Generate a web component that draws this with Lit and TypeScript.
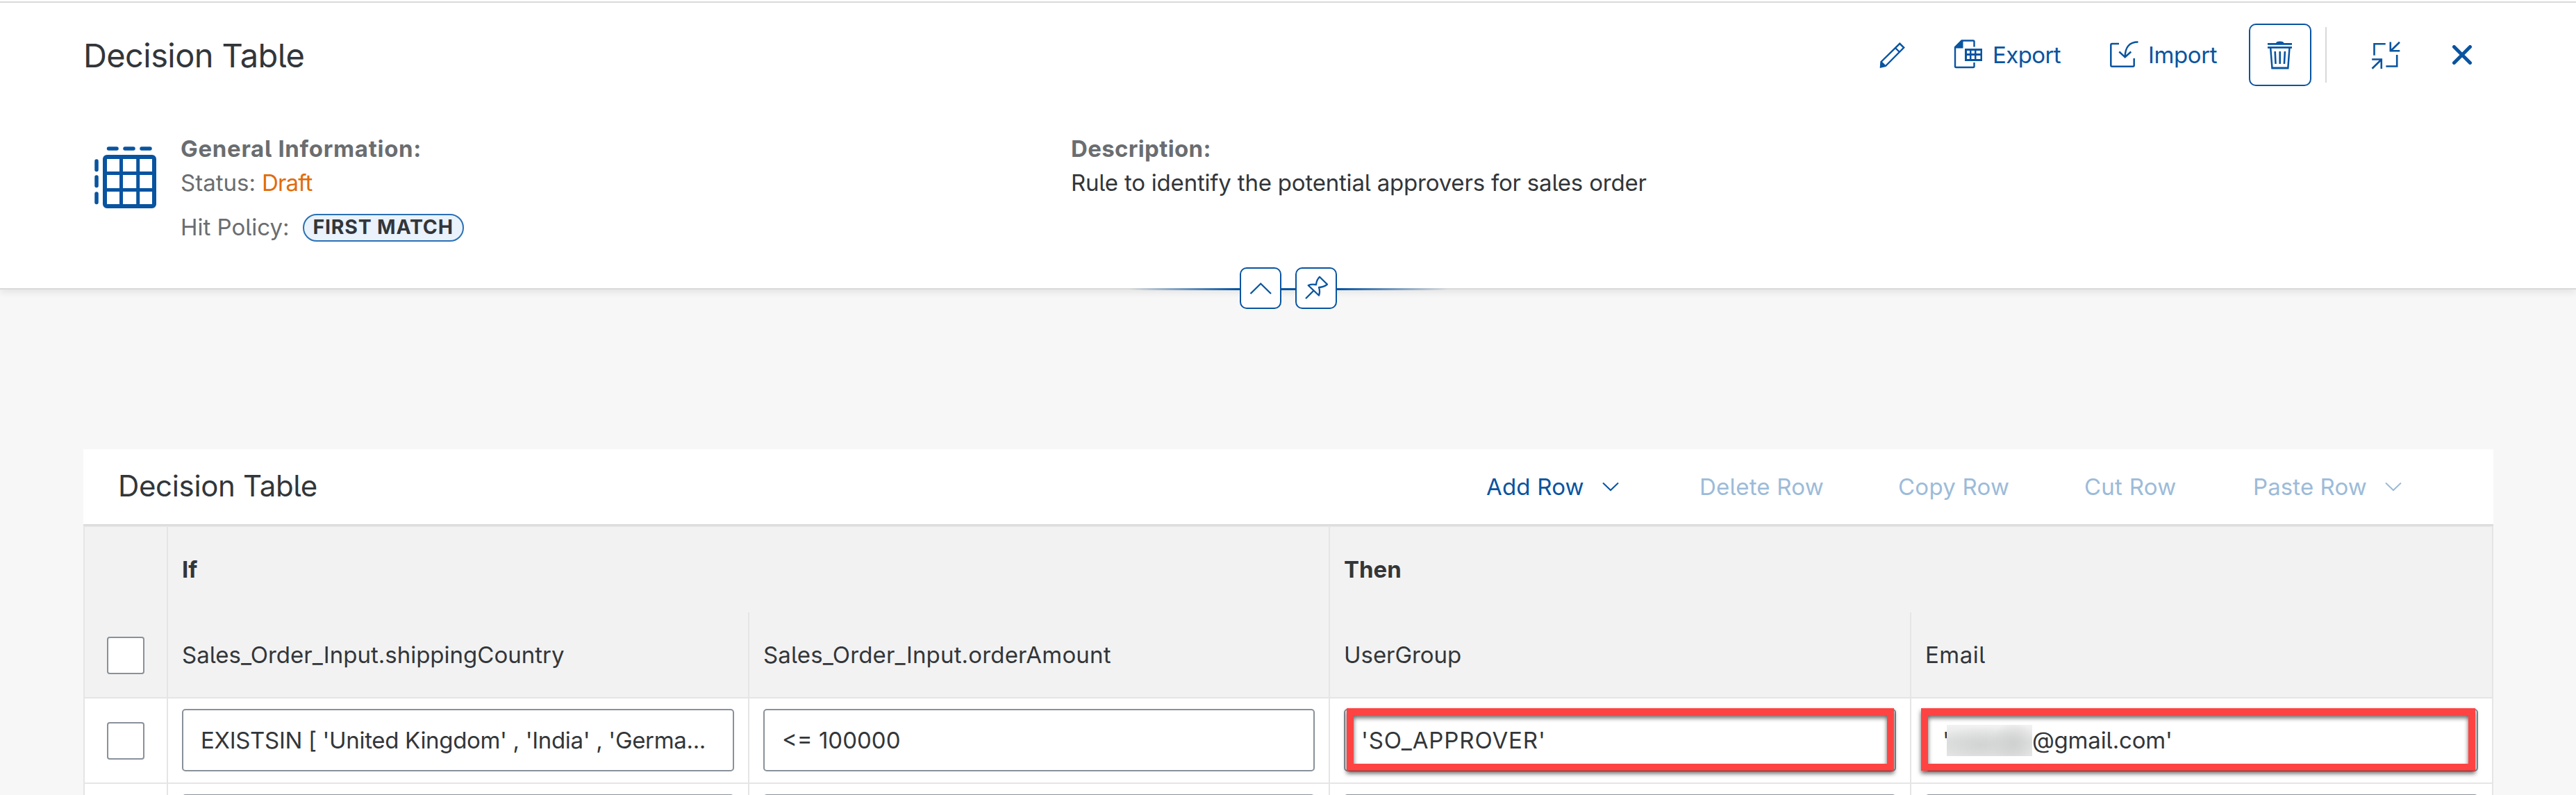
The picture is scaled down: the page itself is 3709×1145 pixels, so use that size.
import { LitElement, html, css } from 'lit';
import { customElement } from 'lit/decorators.js';
import { styleMap } from 'lit/directives/style-map.js';

const sp = (px: number) => styleMap({ letterSpacing: `${px}px` });

const icons = {
  table: html`<svg width="92" height="92" viewBox="0 0 92 92" fill="none" stroke="currentColor" stroke-width="6">
    <rect x="16" y="16" width="71" height="71" rx="3"></rect>
    <path d="M39.5 14V89M63.7 14V89M14 39.5H89M14 63.5H89" stroke-width="5"></path>
    <path d="M21.5 4H33M45 4H57M69 4H81M4 22V34.500M4 45V57.500M4 69V81.500" stroke-linecap="round" stroke-width="5.500"></path></svg>`,
  edit: html`<svg width="40" height="40" viewBox="0 0 40 40" fill="none" stroke="currentColor" stroke-width="2.4">
    <path d="M4.500 30 31.300 3.800 37.200 9.600 11 36 4 37.500ZM25 10 31 16"></path><path d="M5 29 12 36 3 38.500Z" fill="currentColor" stroke="none"></path></svg>`,
  exportDoc: html`<svg width="44" height="44" viewBox="0 0 44 44" fill="none" stroke="currentColor" stroke-width="2.4">
    <path d="M30.500 10.500V3Q30.500 1.500 29 1.500H12.500L3 11V38.500Q3 40 4.500 40H29Q30.500 40 30.500 38.500V33"></path>
    <path d="M12 1H14.500V12.500H2V11Z" fill="currentColor" stroke="none"></path>
    <path d="M17 13H42V31H17ZM20 16V20H24V16ZM26.500 16V20H31V16ZM33.500 16V20H39.500V16ZM20 23V28H24V23ZM26.500 23V28H31V23ZM33.500 23V28H39.500V23Z" fill="currentColor" stroke="none" fill-rule="evenodd"></path></svg>`,
  importDoc: html`<svg width="44" height="44" viewBox="0 0 44 44" fill="none" stroke="currentColor" stroke-width="2.500">
    <path d="M15 6H5Q3.300 6 3.300 8V37Q3.300 38.700 5 38.700H35Q36.700 38.700 36.700 37V27"></path>
    <path d="M42.500 3.500C30 3.500 23.700 11 23.700 25M15.300 17.500 23.700 25.300 32.300 17.500"></path></svg>`,
  trash: html`<svg width="42" height="44" viewBox="0 0 42 44" fill="none" stroke="currentColor" stroke-width="2.600">
    <path d="M3 6.400H38M3 11.400H38"></path><path d="M15 5.500Q15 2.500 20.700 2.500T26.500 5.500Z" fill="currentColor" stroke="none"></path>
    <path d="M7.200 12 9.500 41.300H32.300L34.500 12" stroke-width="2.500"></path><path d="M9.500 40.800H32.300M13.700 17 14.500 35M20.700 17V35M27.900 17 26.900 35"></path></svg>`,
  exitFull: html`<svg width="46" height="44" viewBox="0 0 46 44" fill="none" stroke="currentColor" stroke-width="2.600">
    <path d="M6.500 22.700V6.300H22.700M29.800 3.500V16.300H43.300M43 3.800 30.500 16M39.200 22V38.500H23.400M3.200 28.500H16.800V42M3.500 41.700 16.500 29"></path></svg>`,
  close: html`<svg width="28" height="28" viewBox="0 0 28 28" fill="none" stroke="currentColor" stroke-width="5">
    <path d="M2.500 2.500 25.500 25.500M25.500 2.500 2.500 25.500" stroke-linecap="round"></path></svg>`,
  up: html`<svg width="60" height="60" viewBox="0 0 60 60" fill="none" stroke="currentColor" stroke-width="2.300">
    <path d="M15.500 38 30.200 23.500 45 38"></path></svg>`,
  pin: html`<svg width="60" height="60" viewBox="0 0 60 60" fill="none" stroke="currentColor" stroke-width="2.300" stroke-linejoin="round">
    <path d="M15 45 26 34M35 13.800 46 24.500Q41 28.500 34 29 36 35 34 40.500L18.700 26Q23 24 30 25 30.500 18 35 13.800Z"></path></svg>`,
  down: html`<svg width="24" height="14" viewBox="0 0 24 14" fill="none" stroke="currentColor" stroke-width="2">
    <path d="M1 1.500 12 12 23 1.500"></path></svg>`,
};

@customElement('app-root')
export class AppRoot extends LitElement {
  static styles = css`
    :host { display: block; width: 100%; height: 1145px; overflow: hidden; background: #f7f7f7; color: #32363a;
      font: 33px/49px Inter, "Noto Sans", sans-serif; font-feature-settings: "cv05"; }
    * { box-sizing: border-box; }
    svg { display: block; flex: none; }
    span { white-space: pre; }
    .header { position: relative; height: 417px; background: #fff; padding: 2px 119px 0 120px; border-bottom: 2px solid #d9d9d9;
      box-shadow: 0 5px 9px rgba(0, 0, 0, .07); }
    .rule { height: 2px; margin: 0 -119px 0 -120px; background: #d9d9d9; }
    .bar { display: flex; align-items: center; height: 90px; margin-top: 30px; color: #0854a0; }
    .title { flex: 1; font-size: 47px; color: #32363a; }
    .btn { display: flex; align-items: center; justify-content: center; height: 90px; width: 90px; border-radius: 10px; }
    .btn.first svg { margin-left: 2px; }
    .btn.wide { width: 203px; justify-content: flex-start; padding-left: 23px; margin-left: 21px; gap: 13px; }
    .btn.outlined { border: 2px solid #0854a0; margin-left: 22px; }
    .sep { width: 2px; height: 80px; margin: 0 40px 0 20px; background: #d9d9d9; }
    .btn.last { margin-left: 20px; }
    .info { display: grid; grid-template-columns: 125px 1282px 1fr; padding: 66px 0 0 15px; }
    .glyph { color: #0854a0; padding-top: 20px; }
    .label { color: #6a6d70; }
    .bold { font-weight: 700; }
    .draft { color: #e06c0a; }
    .status { display: flex; gap: 9px; }
    .policy { display: flex; align-items: center; gap: 19px; margin-top: 15px; }
    .pill { height: 40px; width: 232px; border: 2px solid #2a70b5; border-radius: 20px; background: #eaf2fb; display: flex;
      align-items: center; justify-content: center; font-size: 28.500px; font-weight: 700; padding-bottom: 3px; }
    .toggle { position: absolute; left: 1625px; top: 385px; width: 460px; height: 60px; display: flex; justify-content: center; gap: 20px; color: #0854a0; }
    .toggle::before { content: ""; position: absolute; left: 0; right: 0; top: 30px; height: 3px;
      background: linear-gradient(90deg, rgba(8, 84, 160, 0), #0854a0 34%, #0854a0 66%, rgba(8, 84, 160, 0)); }
    .sq { position: relative; width: 60px; height: 60px; border: 2px solid #0854a0; border-radius: 10px; background: #fff; }
    .sq svg { margin: -2px; }
    .panel { width: 3470px; margin: 230px 0 0 120px; background: #fff; }
    .tools { height: 110px; border-bottom: 2px solid #d9d9d9; display: flex; align-items: center; padding-left: 50px; }
    .caption { width: 1970px; font-size: 42px; padding-bottom: 3px; }
    .actions { display: grid; grid-template-columns: 307px 286px 268px 243px auto; color: #9cbbd9; }
    .action { display: flex; align-items: center; gap: 26px; }
    .action.on { color: #0854a0; }
    .grid { display: grid; grid-template-columns: 120px 837px 836px 837px 838px; border-left: 2px solid #e5e5e5; border-top: 2px solid #e5e5e5; }
    .c { border-right: 2px solid #e5e5e5; padding-left: 20px; display: flex; align-items: center; }
    .h { background: #f2f2f2; height: 123px; }
    .h2 { height: 124px; border-bottom: 2px solid #e5e5e5; background: #f2f2f2; }
    .h2 .box { margin-top: 2px; }
    .span2 { grid-column: span 2; }
    .body { height: 123px; border-bottom: 2px solid #e5e5e5; padding: 15px 20px 0; align-items: flex-start; }
    .sel { padding: 0; justify-content: center; align-items: center; }
    .box { width: 54px; height: 54px; border: 2px solid #89919a; border-radius: 4px; background: #fff; }
    .field { position: relative; flex: 1; height: 90px; border: 2px solid #89919a; border-radius: 5px; background: #fff; padding-left: 25px;
      display: flex; align-items: center; }
    .field.out { padding-left: 23px; }
    .mark { position: absolute; top: -3px; bottom: -1px; left: 2px; right: 1px; border: 10px solid #ff4343; filter: drop-shadow(0 4px 3px rgba(0, 0, 0, .6)); }
    .mark.shift { left: -8px; right: 2px; }
    .masked { width: 123px; height: 45px; margin: 0 0 0 -4px;
      background: radial-gradient(circle at 78% 60%, #cfd0d0 0, rgba(208, 209, 209, 0) 32%), radial-gradient(ellipse at 40% 64%, #d2d3d3 0, rgba(220, 220, 220, 0) 65%), linear-gradient(#f2f2f2, #dfe0e0 55%, #e6e6e7); }
  `;

  render() {
    return html`
      <div class="header">
        <div class="rule"></div>
        <div class="bar">
          <div class="title"><span style=${sp(-0.6)}>Decision Table</span></div>
          <div class="btn first">${icons.edit}</div>
          <div class="btn wide">${icons.exportDoc}<span style=${sp(-0.6)}>Export</span></div>
          <div class="btn wide">${icons.importDoc}<span style=${sp(-0.4)}>Import</span></div>
          <div class="btn outlined">${icons.trash}</div>
          <div class="sep"></div>
          <div class="btn">${icons.exitFull}</div>
          <div class="btn last">${icons.close}</div>
        </div>
        <div class="info">
          <div class="glyph">${icons.table}</div>
          <div>
            <div class="label bold"><span style=${sp(0.7)}>General Information:</span></div>
            <div class="status"><span class="label">Status:</span><span class="draft" style=${sp(-0.8)}>Draft</span></div>
            <div class="policy"><span class="label">Hit Policy:</span><div class="pill"><span style=${sp(0.8)}>FIRST MATCH</span></div></div>
          </div>
          <div>
            <div class="label bold"><span style=${sp(0.35)}>Description:</span></div>
            <div><span style=${sp(-0.2)}>Rule to identify the potential approvers for sales order</span></div>
          </div>
        </div>
        <div class="toggle"><div class="sq">${icons.up}</div><div class="sq">${icons.pin}</div></div>
      </div>
      <div class="panel">
        <div class="tools">
          <div class="caption"><span style=${sp(-0.35)}>Decision Table</span></div>
          <div class="actions">
            <div class="action on"><span style=${sp(0.2)}>Add Row</span>${icons.down}</div>
            <div class="action"><span style=${sp(0.2)}>Delete Row</span></div>
            <div class="action"><span style=${sp(0.25)}>Copy Row</span></div>
            <div class="action"><span style=${sp(0.25)}>Cut Row</span></div>
            <div class="action"><span style=${sp(0.1)}>Paste Row</span>${icons.down}</div>
          </div>
        </div>
        <div class="grid">
          <div class="c h sel"></div>
          <div class="c h span2 bold"><span>If</span></div>
          <div class="c h span2 bold"><span>Then</span></div>
          <div class="c h2 sel"><div class="box"></div></div>
          <div class="c h2"><span>Sales_Order_Input.shippingCountry</span></div>
          <div class="c h2"><span style=${sp(0.17)}>Sales_Order_Input.orderAmount</span></div>
          <div class="c h2"><span style=${sp(-0.05)}>UserGroup</span></div>
          <div class="c h2"><span style=${sp(0.5)}>Email</span></div>
          <div class="c body sel"><div class="box"></div></div>
          <div class="c body"><div class="field"><span style=${sp(-0.33)}>EXISTSIN [ 'United Kingdom' , 'India' , 'Germa...</span></div></div>
          <div class="c body"><div class="field"><span>&lt;= 100000</span></div></div>
          <div class="c body"><div class="field out"><span style=${sp(0.9)}>'SO_APPROVER'</span><div class="mark"></div></div></div>
          <div class="c body"><div class="field out"><span>'</span><div class="masked"></div><span style=${sp(-0.2)}>@gmail.com'</span><div class="mark shift"></div></div></div>
          <div class="c body sel"><div class="box"></div></div>
          ${[0, 1, 2, 3].map(() => html`<div class="c body"><div class="field"></div></div>`)}
        </div>
      </div>`;
  }
}
